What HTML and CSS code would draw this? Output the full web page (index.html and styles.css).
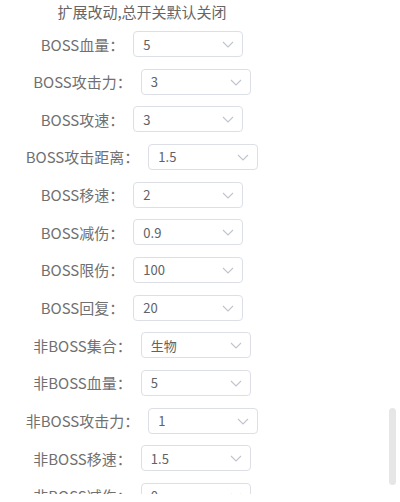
FILE: index.html
```html
<!DOCTYPE html>
<html>
<head>
<meta charset="utf-8">
<link rel="stylesheet" href="styles.css">
</head>
<body>
<div class="viewport">
  <div class="panel">
    <div class="title">扩展改动,总开关默认关闭</div>
    <div class="row"><span class="label">BOSS血量：</span><div class="select"><span class="value">5</span><svg class="arrow" viewBox="0 0 12 7"><path d="M1 1 L6 6 L11 1"/></svg></div></div>
    <div class="row"><span class="label">BOSS攻击力：</span><div class="select"><span class="value">3</span><svg class="arrow" viewBox="0 0 12 7"><path d="M1 1 L6 6 L11 1"/></svg></div></div>
    <div class="row"><span class="label">BOSS攻速：</span><div class="select"><span class="value">3</span><svg class="arrow" viewBox="0 0 12 7"><path d="M1 1 L6 6 L11 1"/></svg></div></div>
    <div class="row"><span class="label">BOSS攻击距离：</span><div class="select"><span class="value">1.5</span><svg class="arrow" viewBox="0 0 12 7"><path d="M1 1 L6 6 L11 1"/></svg></div></div>
    <div class="row"><span class="label">BOSS移速：</span><div class="select"><span class="value">2</span><svg class="arrow" viewBox="0 0 12 7"><path d="M1 1 L6 6 L11 1"/></svg></div></div>
    <div class="row"><span class="label">BOSS减伤：</span><div class="select"><span class="value">0.9</span><svg class="arrow" viewBox="0 0 12 7"><path d="M1 1 L6 6 L11 1"/></svg></div></div>
    <div class="row"><span class="label">BOSS限伤：</span><div class="select"><span class="value">100</span><svg class="arrow" viewBox="0 0 12 7"><path d="M1 1 L6 6 L11 1"/></svg></div></div>
    <div class="row"><span class="label">BOSS回复：</span><div class="select"><span class="value">20</span><svg class="arrow" viewBox="0 0 12 7"><path d="M1 1 L6 6 L11 1"/></svg></div></div>
    <div class="row"><span class="label">非BOSS集合：</span><div class="select"><span class="value">生物</span><svg class="arrow" viewBox="0 0 12 7"><path d="M1 1 L6 6 L11 1"/></svg></div></div>
    <div class="row"><span class="label">非BOSS血量：</span><div class="select"><span class="value">5</span><svg class="arrow" viewBox="0 0 12 7"><path d="M1 1 L6 6 L11 1"/></svg></div></div>
    <div class="row"><span class="label">非BOSS攻击力：</span><div class="select"><span class="value">1</span><svg class="arrow" viewBox="0 0 12 7"><path d="M1 1 L6 6 L11 1"/></svg></div></div>
    <div class="row"><span class="label">非BOSS移速：</span><div class="select"><span class="value">1.5</span><svg class="arrow" viewBox="0 0 12 7"><path d="M1 1 L6 6 L11 1"/></svg></div></div>
    <div class="row"><span class="label">非BOSS减伤：</span><div class="select"><span class="value">0</span><svg class="arrow" viewBox="0 0 12 7"><path d="M1 1 L6 6 L11 1"/></svg></div></div>
  </div>
  <div class="scroll-thumb"></div>
</div>
</body>
</html>
```

FILE: styles.css
```css
html, body {
  margin: 0;
  padding: 0;
  background: #ffffff;
}
body {
  font-family: "Noto Sans CJK SC", "Noto Sans", sans-serif;
  color: #606266;
}
.viewport {
  position: relative;
  width: 400px;
  height: 494px;
  overflow: hidden;
}
.panel {
  width: 284px;
  display: flex;
  flex-direction: column;
  align-items: center;
  gap: 11.67px;
}
.title {
  font-size: 15px;
  line-height: 24px;
  height: 24px;
  color: #666666;
  margin-bottom: -4.67px;
}
.row {
  display: flex;
  align-items: center;
  height: 26px;
  flex-shrink: 0;
}
.label {
  font-size: 15px;
  color: #707070;
  margin-right: 9px;
  white-space: nowrap;
}
.select {
  box-sizing: border-box;
  width: 110px;
  height: 26px;
  border: 1px solid #dcdfe6;
  border-radius: 4px;
  display: flex;
  align-items: center;
  justify-content: space-between;
  padding: 0 8px 0 9px;
}
.value {
  font-size: 13px;
  color: #606266;
}
.arrow {
  width: 12px;
  height: 7px;
  fill: none;
  stroke: #c0c4cc;
  stroke-width: 1.1;
  margin-top: 1px;
}
.scroll-thumb {
  position: absolute;
  left: 389px;
  top: 408px;
  width: 7px;
  height: 77px;
  border-radius: 4px;
  background: #e6e6e6;
}
```
